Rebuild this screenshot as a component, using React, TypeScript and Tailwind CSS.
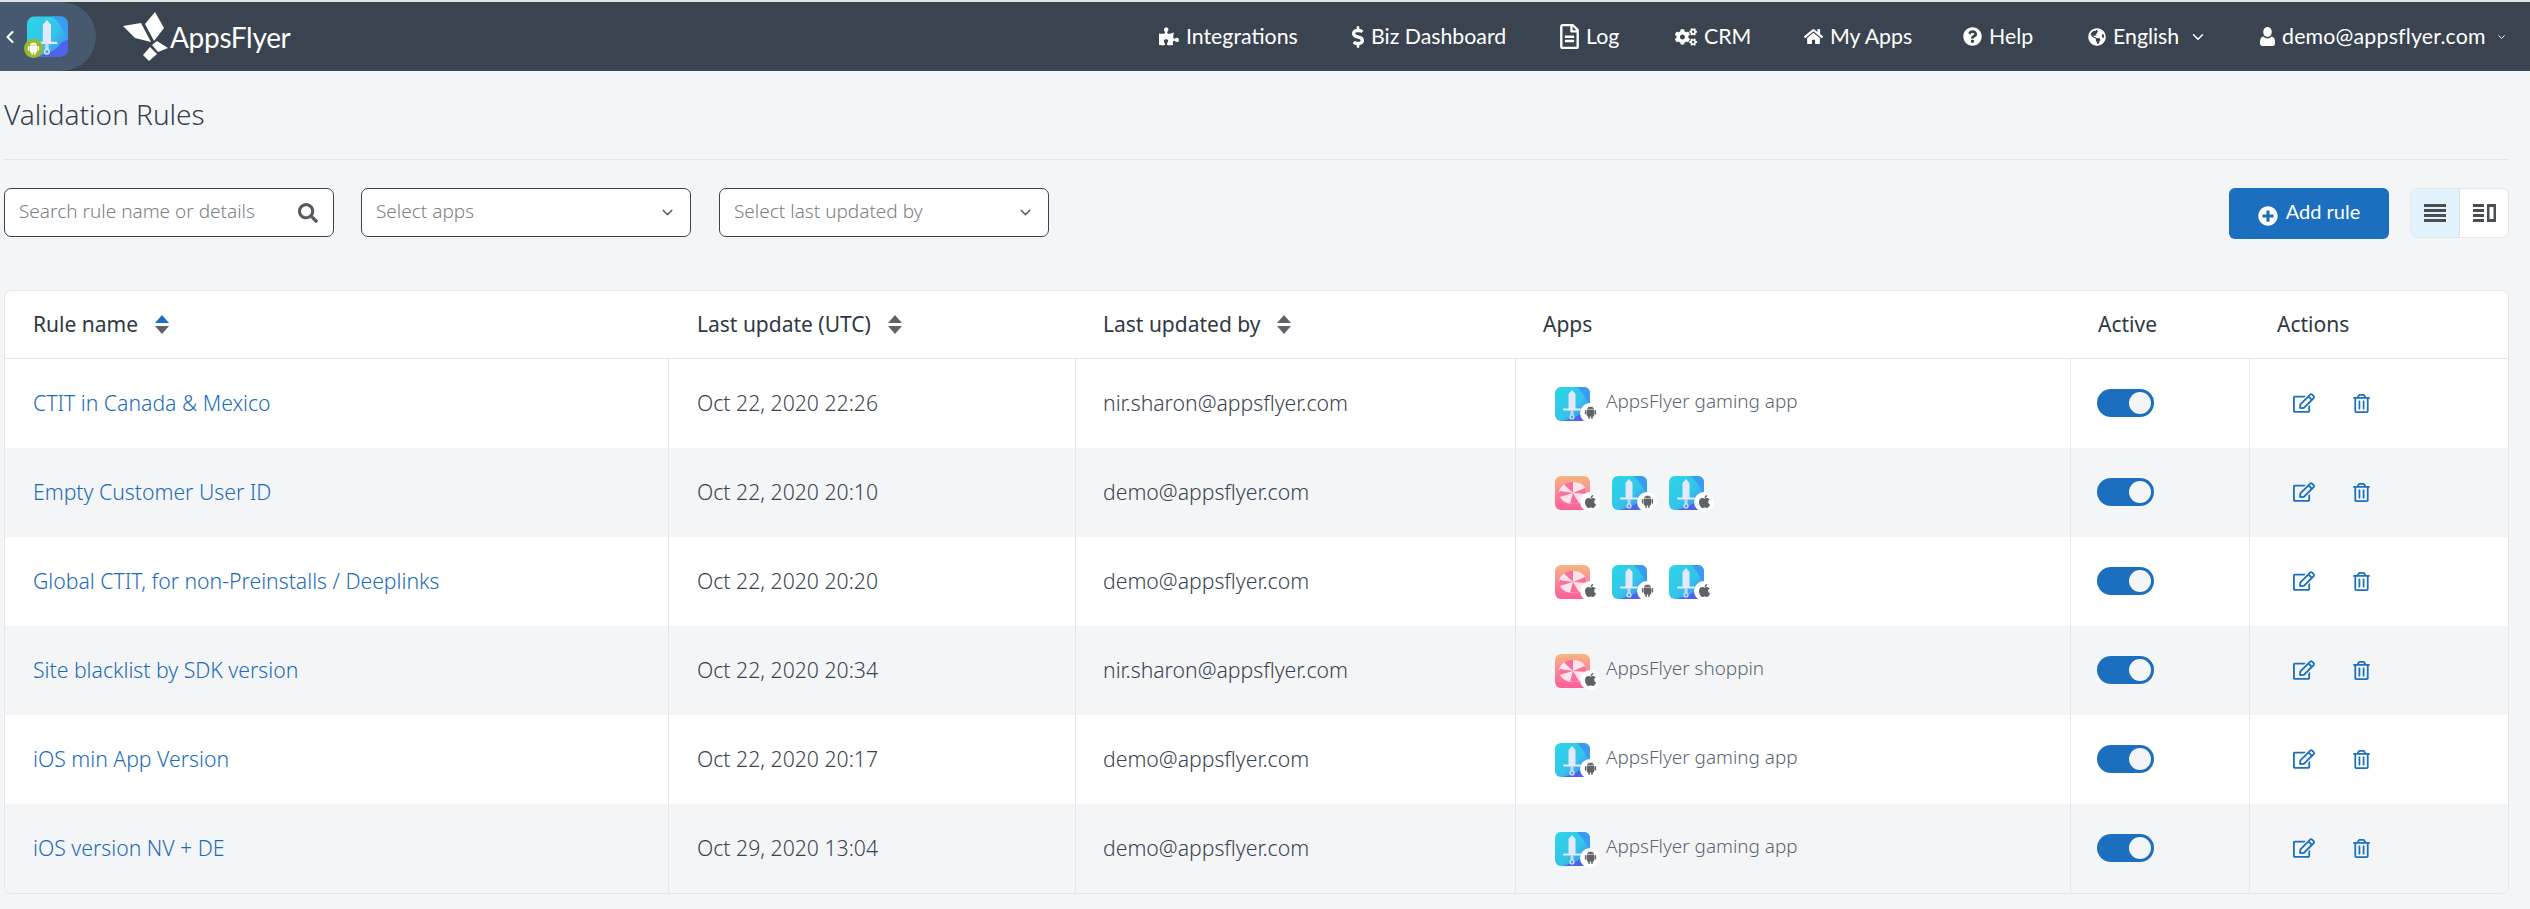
import React from "react";
import {
  FaPuzzlePiece, FaDollarSign, FaRegFileAlt, FaCogs, FaHome, FaQuestionCircle,
  FaGlobeAmericas, FaSearch, FaPlusCircle, FaApple, FaRegEdit, FaRegTrashAlt,
} from "react-icons/fa";
import { AiFillAndroid } from "react-icons/ai";
import { ChevronDown, ChevronLeft } from "lucide-react";

const Sword = ({ id }: { id: string }) => (
  <svg viewBox="0 0 35 34" className="w-full h-full block">
    <defs>
      <linearGradient id={id} x1="0" y1="0" x2="1" y2="1">
        <stop offset="0" stopColor="#2bd6e6" />
        <stop offset="0.55" stopColor="#35c4ea" />
        <stop offset="1" stopColor="#3f7df0" />
      </linearGradient>
    </defs>
    <rect width="35" height="34" rx="6" fill={`url(#${id})`} />
    <path d="M22 0h7a6 6 0 0 1 6 6v14c-4-9-7-14-13-20z" fill="#3a9bf2" />
    <path d="M8 34c6-2 16-4 20-10 3-3 5-4 7-4v8a6 6 0 0 1-6 6z" fill="#4f63ea" />
    <path d="M17 3l3.500 4v15h-7V7z" fill="#e3e9fc" />
    <rect x="8" y="21.500" width="18" height="2" rx="1" fill="#e8edfd" />
    <rect x="15.500" y="23" width="3" height="5" fill="#c9d6f8" />
    <circle cx="17" cy="30" r="2" fill="none" stroke="#dfe6fb" strokeWidth="1.200" />
  </svg>
);

const Candy = ({ id }: { id: string }) => (
  <svg viewBox="0 0 35 34" className="w-full h-full block">
    <defs>
      <linearGradient id={id} x1="0" y1="0" x2="0" y2="1">
        <stop offset="0" stopColor="#f6b77e" />
        <stop offset="0.4" stopColor="#fa8f96" />
        <stop offset="1" stopColor="#fb5f98" />
      </linearGradient>
    </defs>
    <rect width="35" height="34" rx="6" fill={`url(#${id})`} />
    <ellipse cx="18" cy="17" rx="14" ry="11" fill="#fde3ea" />
    <path d="M18 17L9 8.500c3-2 6-2.500 9-2.500zM18 17l12-5c1.500 2 2 4 2 6zM18 17l6 10c-3 1-6 1-9 .6zM18 17L4.500 21c-.8-2-.6-4 .2-6z" fill="#fb6f9c" />
  </svg>
);

const AppIcon = ({ kind, os, id }: { kind: "sword" | "candy"; os: "android" | "apple"; id: string }) => (
  <div className="relative w-[35px] h-[34px] shrink-0">
    {kind === "sword" ? <Sword id={id} /> : <Candy id={id} />}
    <div className="absolute left-[25px] top-[16px] w-[20px] h-[20px] rounded-full bg-white flex items-center justify-center text-[#5f6368]">
      {os === "android" ? <AiFillAndroid size={15} /> : <FaApple size={15} />}
    </div>
  </div>
);

const Sort = ({ active }: { active?: boolean }) => (
  <svg width="14" height="19" viewBox="0 0 14 19" className="ml-[17px] shrink-0">
    <path d="M7 0l7 8H0z" fill={active ? "#1b6fbe" : "#5f6368"} />
    <path d="M7 19l7-8H0z" fill="#5f6368" />
  </svg>
);

const UserIcon = () => (
  <svg viewBox="0 0 15 19" className="w-[15px] h-[19px]" fill="currentColor">
    <ellipse cx="7.500" cy="5" rx="4.300" ry="5" />
    <path d="M3.500 9.500c1 1.300 2.500 2 4 2s3-.7 4-2c2 .4 3.500 2 3.500 5v2c0 1.500-1 2.500-2.500 2.500h-10C1 19 0 18 0 16.500v-2c0-3 1.500-4.600 3.500-5z" />
  </svg>
);

const navItems: { icon: React.ReactNode; label: string; w: string; chevron?: boolean; wide?: boolean }[] = [
  { icon: <FaPuzzlePiece className="w-[20px] h-[21px]" />, label: "Integrations", w: "w-[193px]" },
  { icon: <FaDollarSign className="w-[12px] h-[22px]" />, label: "Biz Dashboard", w: "w-[208px]" },
  { icon: <FaRegFileAlt className="w-[19px] h-[25px]" />, label: "Log", w: "w-[115px]" },
  { icon: <FaCogs className="w-[22px] h-[22px]" />, label: "CRM", w: "w-[129px]" },
  { icon: <FaHome className="w-[19px] h-[19px]" />, label: "My Apps", w: "w-[159px]" },
  { icon: <FaQuestionCircle className="w-[19px] h-[19px]" />, label: "Help", w: "w-[125px]" },
  { icon: <FaGlobeAmericas className="w-[18px] h-[18px]" />, label: "English", w: "w-[172px]", chevron: true },
  { icon: <UserIcon />, label: "demo@appsflyer.com", w: "w-[247px]", chevron: true, wide: true },
];

type Row = {
  name: string; date: string; by: string;
  apps: { kind: "sword" | "candy"; os: "android" | "apple" }[];
  label?: string;
};

const gaming: Row["apps"] = [{ kind: "sword", os: "android" }];
const three: Row["apps"] = [
  { kind: "candy", os: "apple" },
  { kind: "sword", os: "android" },
  { kind: "sword", os: "apple" },
];

const rows: Row[] = [
  { name: "CTIT in Canada & Mexico", date: "Oct 22, 2020 22:26", by: "nir.sharon@appsflyer.com", apps: gaming, label: "AppsFlyer gaming app" },
  { name: "Empty Customer User ID", date: "Oct 22, 2020 20:10", by: "demo@appsflyer.com", apps: three },
  { name: "Global CTIT, for non-Preinstalls / Deeplinks", date: "Oct 22, 2020 20:20", by: "demo@appsflyer.com", apps: three },
  { name: "Site blacklist by SDK version", date: "Oct 22, 2020 20:34", by: "nir.sharon@appsflyer.com", apps: [{ kind: "candy", os: "apple" }], label: "AppsFlyer shoppin" },
  { name: "iOS min App Version", date: "Oct 22, 2020 20:17", by: "demo@appsflyer.com", apps: gaming, label: "AppsFlyer gaming app" },
  { name: "iOS version NV + DE", date: "Oct 29, 2020 13:04", by: "demo@appsflyer.com", apps: gaming, label: "AppsFlyer gaming app" },
];

const cols = "grid grid-cols-[663px_407px_440px_555px_179px_1fr]";

const Select = ({ label }: { label: string }) => (
  <div className="w-[330px] h-[49px] rounded-[7px] border border-[#3a4450] bg-white flex items-center justify-between pl-[14px] pr-[14px] text-[#7d7f82] text-[19px] font-light">
    <span className="-mt-[2px]">{label}</span>
    <ChevronDown size={17} className="text-[#5f6368]" />
  </div>
);

export default function App() {
  return (
    <div className="min-h-screen w-[2530px] bg-[#f4f5f7] border-t-2 border-[#dfe1e4] text-[21.200px] font-[350] text-[#3a4450] font-['Noto_Sans','Lato',sans-serif]">
      <header className="h-[69px] bg-[#3a4450] flex items-center text-white font-normal">
        <div className="w-[96px] h-full bg-[#46596e] rounded-r-[36px] flex items-center">
          <ChevronLeft size={20} strokeWidth={2.5} />
          <div className="relative w-[41px] h-[41px] ml-[7px]">
            <Sword id="hdr" />
            <div className="absolute left-[-3px] top-[23px] w-[19px] h-[19px] rounded-full bg-[#9ab82d] flex items-center justify-center">
              <AiFillAndroid size={15} className="text-white" />
            </div>
          </div>
        </div>
        <div className="ml-[27px] flex items-center">
          <svg width="45" height="49" viewBox="0 0 45 49" fill="#fff">
            <path d="M32 0l9 16-10 13-9-17z" />
            <path d="M0 14l18-3 10 19-16-4z" />
            <path d="M29 33l5-4 11 7-10 4z" />
            <path d="M20 43l7-8 7 7-8 7z" />
          </svg>
          <span className="ml-[2px] text-[28px] leading-none font-['Lato',sans-serif] tracking-[-0.3px]">AppsFlyer</span>
        </div>
        <nav className="ml-auto pr-[23px] flex items-center h-full font-['Lato',sans-serif]">
          {navItems.map((n) => (
            <div key={n.label} className={`${n.w} flex items-center gap-[7px] text-[21.300px] whitespace-nowrap`}>
              <span className="flex justify-center shrink-0">{n.icon}</span>
              <span className={n.wide ? "tracking-[0.2px]" : ""}>{n.label}</span>
              {n.chevron && <ChevronDown size={18} className="ml-[3px]" />}
            </div>
          ))}
        </nav>
      </header>

      <main className="pl-[4px] pr-[21px]">
        <div className="h-[89px] border-b border-[#e4e6e9] flex items-center pb-[3px]">
          <h1 className="text-[28px] font-[350] text-[#333f4d]">Validation Rules</h1>
        </div>

        <div className="mt-[28px] flex items-start">
          <div className="w-[330px] h-[49px] rounded-[7px] border border-[#3a4450] bg-white flex items-center justify-between pl-[14px] pr-[15px] text-[#7d7f82] text-[19px] font-light">
            <span className="-mt-[2px]">Search rule name or details</span>
            <FaSearch size={20} className="text-[#565a5f]" />
          </div>
          <div className="ml-[27px]"><Select label="Select apps" /></div>
          <div className="ml-[28px]"><Select label="Select last updated by" /></div>

          <button className="ml-auto w-[160px] h-[51px] rounded-[6px] bg-[#1b6fbe] text-white flex items-center justify-center gap-[8px] text-[20px] font-normal font-['Lato',sans-serif]">
            <FaPlusCircle size={20} className="mt-[4px]" />
            <span className="-mt-[5px]">Add rule</span>
          </button>
          <div className="ml-[21px] w-[99px] h-[50px] rounded-[7px] border border-[#e4e6e9] bg-white flex overflow-hidden">
            <div className="w-[49px] bg-[#e1f2fd] border-r border-[#dfe3e6] flex items-center justify-center">
              <svg width="22" height="18" viewBox="0 0 22 18" fill="#4a4d52">
                <rect y="0" width="22" height="3" /><rect y="5" width="22" height="3" /><rect y="10" width="22" height="3" /><rect y="15" width="22" height="3" />
              </svg>
            </div>
            <div className="flex-1 flex items-center justify-center">
              <svg width="23" height="18" viewBox="0 0 23 18" fill="#4a4d52">
                <rect y="0" width="11" height="3" /><rect y="5" width="11" height="3" /><rect y="10" width="11" height="3" /><rect y="15" width="11" height="3" />
                <path d="M14 0h9v18h-9zM16.500 3v12h4V3z" fillRule="evenodd" />
              </svg>
            </div>
          </div>
        </div>

        <section className="mt-[51px] bg-white border border-[#e4e6e9] rounded-[7px] overflow-hidden">
          <div className={`${cols} h-[68px] items-center border-b border-[#e4e6e9] text-[#2f3843] text-[21px] font-normal`}>
            <div className="pl-[28px] flex items-center">Rule name<Sort active /></div>
            <div className="pl-[29px] flex items-center">Last update (UTC)<Sort /></div>
            <div className="pl-[28px] flex items-center">Last updated by<Sort /></div>
            <div className="pl-[28px]">Apps</div>
            <div className="pl-[28px]">Active</div>
            <div className="pl-[28px]">Actions</div>
          </div>
          {rows.map((r, i) => (
            <div key={r.name} className={`${cols} h-[89px] items-stretch ${i % 2 ? "bg-[#f4f5f7]" : "bg-white"}`}>
              <div className="pl-[28px] pb-[2px] flex items-center text-[#1a6cb9]">{r.name}</div>
              <div className="pl-[28px] pb-[2px] flex items-center border-l border-[#e4e6e9]">{r.date}</div>
              <div className="pl-[27px] pb-[2px] flex items-center border-l border-[#e4e6e9]">{r.by}</div>
              <div className="pl-[39px] flex items-center gap-[22px] border-l border-[#e4e6e9]">
                {r.apps.map((a, j) => (
                  <AppIcon key={j} kind={a.kind} os={a.os} id={`g${i}-${j}`} />
                ))}
                {r.label && <span className="text-[#5b6570] -ml-[6px] pb-[4px] text-[18.900px]">{r.label}</span>}
              </div>
              <div className="pl-[26px] pb-[1px] flex items-center border-l border-[#e4e6e9]">
                <div className="w-[57px] h-[28px] rounded-full bg-[#1b6fbe] flex items-center justify-end pr-[3px]">
                  <div className="w-[22px] h-[22px] rounded-full bg-[#f4f5f7]" />
                </div>
              </div>
              <div className="pl-[43px] pb-[1px] flex items-center gap-[37px] border-l border-[#e4e6e9] text-[#1c70be]">
                <FaRegEdit size={22} />
                <FaRegTrashAlt size={19} />
              </div>
            </div>
          ))}
        </section>
      </main>
    </div>
  );
}
